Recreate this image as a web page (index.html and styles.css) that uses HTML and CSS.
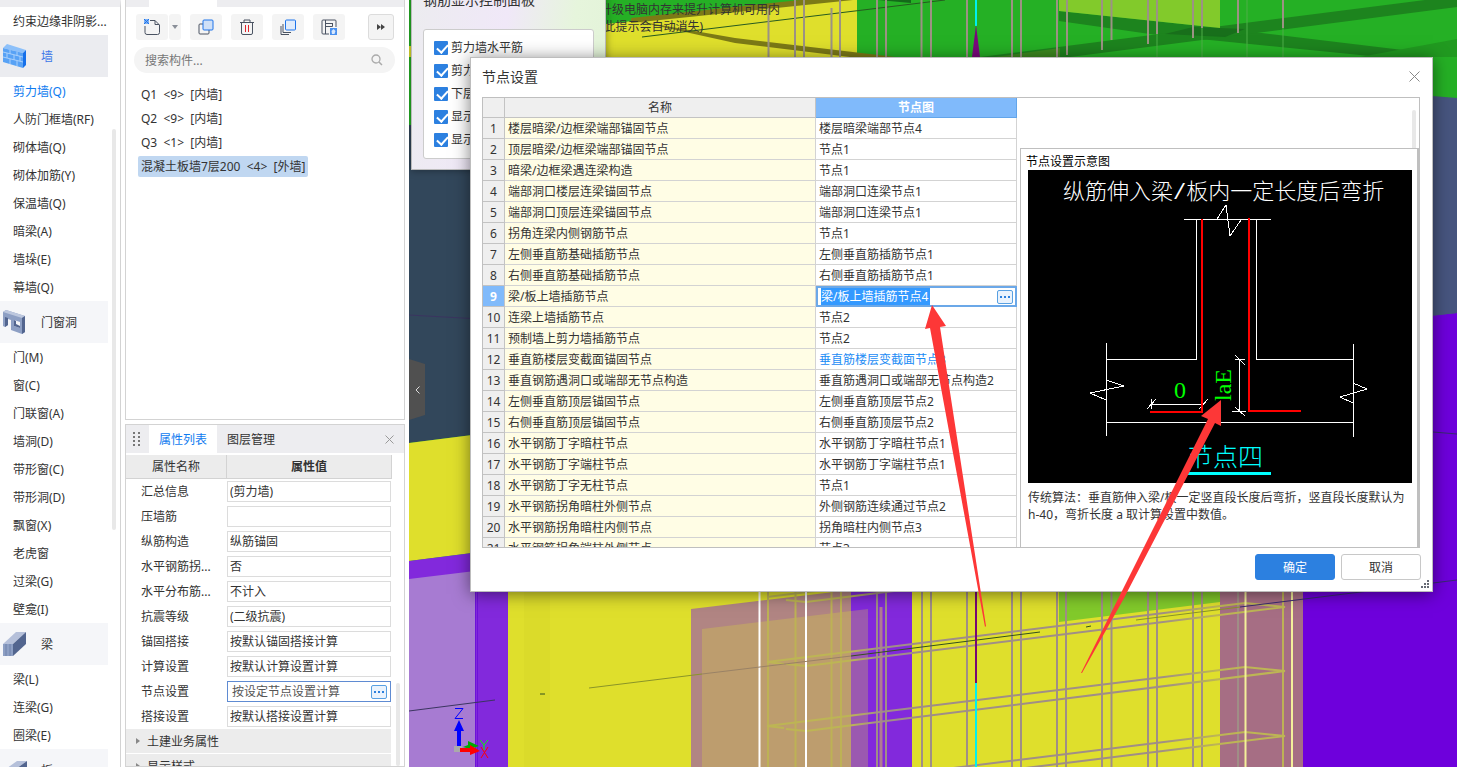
FILE: index.html
```html
<!DOCTYPE html>
<html lang="zh-CN">
    <head>
        <meta charset="utf-8">
        <title>节点设置</title>
        <link rel="stylesheet" href="styles.css">
    </head>
    <body>
        <nav class="nav">
            <a class="item" href="#">约束边缘非阴影...</a>
            <a class="group active" href="#">
                <svg width="24" height="24" viewBox="0 0 24 24"><path d="M0 4L4 0L23 6L20 9Z" fill="#8cc0fa"/><path d="M0 4L20 9V24L0 18Z" fill="#58a2f5"/><path d="M20 9L23 6V21L20 24Z" fill="#1670ea"/><path d="M0 8L20 13M0 13L20 18M7 6V10M14 8V12M4 9V14M11 11V16M17 12V17M7 15V20M14 17V22" stroke="#a9d0fb" fill="none"/></svg>
                墙
            </a>
            <a class="item active" href="#">剪力墙(Q)</a>
            <a class="item" href="#">人防门框墙(RF)</a>
            <a class="item" href="#">砌体墙(Q)</a>
            <a class="item" href="#">砌体加筋(Y)</a>
            <a class="item" href="#">保温墙(Q)</a>
            <a class="item" href="#">暗梁(A)</a>
            <a class="item" href="#">墙垛(E)</a>
            <a class="item" href="#">幕墙(Q)</a>
            <a class="group" href="#">
                <svg width="24" height="24" viewBox="0 0 24 24"><path d="M0 2L3 0L22 6V22L19 24L8 20V10L5 9V15L2 17L0 16Z" fill="#8d9fc4"/><path d="M0 2L3 0L22 6L19 8Z" fill="#bcc7de"/><path d="M19 8L22 6V22L19 24Z" fill="#52658f"/><path d="M2 7L5 8V15L2 17Z" fill="#52658f"/><path d="M11 10L17 12V18L11 16Z" fill="#f5f6f9"/><path d="M11 10L13 11V14L17 16V18L11 16Z" fill="#52658f"/></svg>
                门窗洞
            </a>
            <a class="item" href="#">门(M)</a>
            <a class="item" href="#">窗(C)</a>
            <a class="item" href="#">门联窗(A)</a>
            <a class="item" href="#">墙洞(D)</a>
            <a class="item" href="#">带形窗(C)</a>
            <a class="item" href="#">带形洞(D)</a>
            <a class="item" href="#">飘窗(X)</a>
            <a class="item" href="#">老虎窗</a>
            <a class="item" href="#">过梁(G)</a>
            <a class="item" href="#">壁龛(I)</a>
            <a class="group" href="#">
                <svg width="24" height="24" viewBox="0 0 24 24"><path d="M0 12L13 0H23L10 12Z" fill="#b5c0da"/><path d="M10 12L23 0V12L10 24Z" fill="#52658f"/><path d="M0 12H10V24H0Z" fill="#8d9fc4"/><path d="M3 12V24M7 12V24" stroke="#6f82ab"/></svg>
                梁
            </a>
            <a class="item" href="#">梁(L)</a>
            <a class="item" href="#">连梁(G)</a>
            <a class="item" href="#">圈梁(E)</a>
            <a class="group" href="#">
                <svg width="24" height="24" viewBox="0 0 24 24"><path d="M0 13L14 3H24L10 13Z" fill="#b5c0da"/><path d="M10 13L24 3V9L10 19Z" fill="#52658f"/><path d="M0 13H10V19H0Z" fill="#8d9fc4"/></svg>
                板
            </a>
            <i class="thumb"></i>
        </nav>

        <div class="side">
            <section class="panel components">
                <div class="tab-strip"><i></i></div>
                <div class="toolbar">
                    <div class="split">
                        <button aria-label="新建"><svg width="16" height="16" viewBox="0 0 16 16"><path d="M6 1.5H11L15.500 6V13.500Q15.500 15.500 13.500 15.500H3Q1 15.500 1 13.500V7M11 1.500V5.500H15" fill="none" stroke="#4a5362"/><path d="M0 0H5V5H0Z" fill="#7cb0f5"/><path d="M0 0L5 5M5 0L0 5" stroke="#1e74ea"/></svg></button>
                        <button class="drop" aria-label="更多"><svg width="6" height="4" viewBox="0 0 6 4"><path d="M0 0H6L3 4Z" fill="#8a8f98"/></svg></button>
                    </div>
                    <button aria-label="复制"><svg width="16" height="16" viewBox="0 0 16 16"><rect x="1" y="5" width="10" height="10" rx="1" fill="none" stroke="#4a5362"/><rect x="5" y="1" width="10" height="10" rx="1" fill="#cfe0f7" stroke="#1e74ea"/></svg></button>
                    <button aria-label="删除"><svg width="16" height="16" viewBox="0 0 16 16"><path d="M1 3.500H15M5 3V1H11V3M2.500 4V14Q2.500 15.500 4 15.500H12Q13.500 15.500 13.500 14V4" fill="none" stroke="#4a5362"/><path d="M6.500 6V13M9.500 6V13" stroke="#e0242c"/></svg></button>
                    <button aria-label="层间复制"><svg width="16" height="16" viewBox="0 0 16 16"><path d="M1 7V15.500H9M3 5V13.500H11" fill="none" stroke="#4a5362"/><rect x="5.500" y="1" width="10" height="10" rx="1" fill="#e0ecfc" stroke="#1e74ea"/></svg></button>
                    <button aria-label="存档"><svg width="16" height="16" viewBox="0 0 16 16"><path d="M8 15H2Q1 15 1 14V2Q1 1 2 1H14Q15 1 15 2V8M4.500 1V15M4.500 7.500H11.500V4M4.500 4.500H11" fill="none" stroke="#4a5362"/><rect x="9" y="9" width="7" height="7" fill="#4a90ee"/><path d="M12.500 10L14.500 12L13.500 15H11L10.500 12Z" fill="#d8e8fd"/></svg></button>
                    <button class="more" aria-label="展开"><svg width="8" height="6" viewBox="0 0 8 6"><path d="M0 0L4 3L0 6ZM4 0L8 3L4 6Z" fill="#444"/></svg></button>
                </div>
                <div class="search">
                    <input type="text" placeholder="搜索构件..." aria-label="搜索构件">
                    <svg width="12" height="12" viewBox="0 0 12 12"><circle cx="5" cy="5" r="4" fill="none" stroke="#aaa" stroke-width="1.300"/><path d="M8 8L11 11" stroke="#aaa" stroke-width="1.500"/></svg>
                </div>
                <ul class="list">
                    <li><a href="#">Q1&nbsp; &lt;9&gt;&nbsp; [内墙]</a></li>
                    <li><a href="#">Q2&nbsp; &lt;9&gt;&nbsp; [内墙]</a></li>
                    <li><a href="#">Q3&nbsp; &lt;1&gt;&nbsp; [内墙]</a></li>
                    <li><a class="selected" href="#">混凝土板墙7层200&nbsp; &lt;4&gt;&nbsp; [外墙]</a></li>
                </ul>
            </section>

            <section class="panel props">
                <div class="tabs">
                    <svg class="grip" width="7" height="14" viewBox="0 0 7 14"><path d="M1 0V14M6 0V14" stroke="#777" stroke-width="2" stroke-dasharray="2 2"/></svg>
                    <button class="tab current">属性列表</button>
                    <button class="tab">图层管理</button>
                    <button class="close" aria-label="关闭"><svg width="9" height="9" viewBox="0 0 9 9"><path d="M0.500 0.500L8.500 8.500M8.500 0.500L0.500 8.500" stroke="#999"/></svg></button>
                </div>
                <div class="props-head"><span>属性名称</span><b>属性值</b></div>
                <form class="props-body">
                    <div class="prop"><label for="p1">汇总信息</label><input id="p1" type="text" value="(剪力墙)"></div>
                    <div class="prop"><label for="p2">压墙筋</label><input id="p2" type="text" value=""></div>
                    <div class="prop"><label for="p3">纵筋构造</label><input id="p3" type="text" value="纵筋锚固"></div>
                    <div class="prop"><label for="p4">水平钢筋拐...</label><input id="p4" type="text" value="否"></div>
                    <div class="prop"><label for="p5">水平分布筋...</label><input id="p5" type="text" value="不计入"></div>
                    <div class="prop"><label for="p6">抗震等级</label><input id="p6" type="text" value="(二级抗震)"></div>
                    <div class="prop"><label for="p7">锚固搭接</label><input id="p7" type="text" value="按默认锚固搭接计算"></div>
                    <div class="prop"><label for="p8">计算设置</label><input id="p8" type="text" value="按默认计算设置计算"></div>
                    <div class="prop editing"><label for="p9">节点设置</label><div class="field"><input id="p9" type="text" value="按设定节点设置计算"><button type="button" class="dots" aria-label="选择"><i></i><i></i><i></i></button></div></div>
                    <div class="prop"><label for="p10">搭接设置</label><input id="p10" type="text" value="按默认搭接设置计算"></div>
                    <button type="button" class="fold">土建业务属性</button>
                    <button type="button" class="fold">显示样式</button>
                </form>
                <i class="thumb"></i>
            </section>
        </div>

        <main class="viewport">
            <svg class="scene" viewBox="409 0 1048 767" preserveAspectRatio="xMinYMin slice">
                <defs>
                    <linearGradient id="hoop" gradientUnits="userSpaceOnUse" x1="767" y1="0" x2="1285" y2="0">
                        <stop offset="0.160" stop-color="#bdb554"/>
                        <stop offset="0.220" stop-color="#a08e86"/>
                        <stop offset="0.760" stop-color="#a08e86"/>
                        <stop offset="0.870" stop-color="#bdb554"/>
                    </linearGradient>
                </defs>
                <rect x="409" width="1048" height="767" fill="#25b025"/>
                <!-- upper slabs -->
                <path d="M409 46H470V57H606L606 24L820 0H857V57H409Z" fill="#dfdf2c"/>
                <path d="M631 18L800 0H853L631 23Z" fill="#7c7a16"/>
                <path d="M631 20L735 38L895 57H850L735 43Z" fill="#7c7a16"/>
                <path d="M878 0H911V3Z" fill="#14691a"/>
                <path d="M1059 11L1220 28L1411 51L1380 57L1150 34L1059 21Z" fill="#1d841e"/>
                <path d="M980 57L1425 0H1457V7L1070 57Z" fill="#1d841e"/>
                <path d="M1193 27L1245 29L1225 37L1165 34Z" fill="#186f1b"/>
                <path d="M1360 57L1457 39V57Z" fill="#219a20"/>
                <path d="M1059 0H1220V28L1059 11Z" fill="#82ca2b"/>
                <path d="M995 57L1060 48V57Z" fill="#3d8a20"/>
                <path d="M642 37L945 0" stroke="#265a20"/>
                <path d="M768.500 8V57M795 0V57M804 0V57M831.500 8V57M840 0V57M877 0V57M886 0V57M921.500 0V57M931 0V57M967 0V57M1012 0V57M1021 0V57M1057 0V57M1067 0V55M1102 0V50M1111.500 0V40M1148 0V44M1157 0V34M1193 0V38M1202 0V28M1238 0V33M1283 0V28" stroke="#9c9284" stroke-width="2"/>
                <path d="M1202 28V57M1157 34V57M1247 0V57M1283 28V57" stroke="#4fae48"/>
                <path d="M976 0V26" stroke="#00f0f0" stroke-width="2"/>
                <path d="M976 25L980 57H972Z" fill="#7a087c"/>
                <!-- left and right edges -->
                <path d="M409 125H480V434L409 443Z" fill="#32475b"/>
                <path d="M409 443L480 434V552L409 561Z" fill="#dfdf2c"/>
                <path d="M409 561L480 552L508 592V767H409Z" fill="#8229dc"/>
                <path d="M409 579L475 571V767H409Z" fill="#a77bd2"/>
                <path d="M475.500 580V767M477.500 580V767" stroke="#6d12d8"/>
                <path d="M409 315L480 319M409 711L495 700" stroke="#3b3560"/>
                <path d="M1420 95L1457 98V313L1420 317Z" fill="#47557f"/>
                <!-- lower walls -->
                <path d="M508 580H1230V767H508Z" fill="#dfdf2c"/>
                <path d="M524 592H550V767H524Z" fill="#dbdb2a"/>
                <path d="M691 609L851 590V767H691Z" fill="#b18583"/>
                <path d="M702 629L851 611V767H702Z" fill="#bd9d6e"/>
                <path d="M851 580H912V767H851Z" fill="#8229dc"/>
                <path d="M851 611L868 609V767H851Z" fill="#9b59b0"/>
                <path d="M1059 590H1220V602L1059 622Z" fill="#82ca2b"/>
                <path d="M1220 590H1303V767H1220Z" fill="#a66e84"/>
                <path d="M1303 580L1420 317L1457 313V767H1303Z" fill="#6e00dc"/>
                <path d="M768 592V767M795.500 592V767M831.500 592V767M841 592V767M1283 592V767" stroke="#bdb255" stroke-width="2"/>
                <path d="M877 592V767M886 592V767M922 592V767M931 592V767M967 592V767M1012 592V767M1021 592V767M1057 592V767M1066 592V767M1102 592V767M1111.500 592V767M1148 592V767M1157 592V767M1193 592V767M1202 592V767M1238 592V767" stroke="#a08e86" stroke-width="2"/>
                <path d="M881 607V767" stroke="#b07b92" stroke-width="3"/>
                <g fill="none" stroke="url(#hoop)" stroke-width="2">
                    <path d="M767 597L1245 538L1285 542L806 602L786 600"/>
                    <path d="M767 662L1245 603L1285 607L806 666L786 664M767 662L784 664"/>
                    <path d="M767 726L1245 667L1285 671L806 731L786 729M767 726L784 728"/>
                    <path d="M767 791L1245 732L1285 736L806 795Z"/>
                </g>
                <path d="M759.500 592V767M806 592V767" stroke="#fff" stroke-width="2"/>
                <path d="M1245.500 592V767M1292 592V767" stroke="#f4f09a" stroke-width="2"/>
                <path d="M589 688L702 674M1136 620L1240 607" stroke="#8a9428"/>
                <path d="M702 674L851 656" stroke="#9a8266"/>
                <path d="M851 656L1040 632M540 694H545M1086 627L1091 626" stroke="#33501e"/>
                <path d="M1240 607L1457 580M1433 432L1457 434" stroke="#3a2b70"/>
                <path d="M976 592V683" stroke="#780874" stroke-width="2"/>
                <path d="M976 683V767" stroke="#00f0f0" stroke-width="2"/>
                <!-- coordinate axes -->
                <path d="M454 746H462V752H454Z" fill="#aaa"/>
                <path d="M457 746V731H454L459 720L464 731H461V746Z" fill="#00f"/>
                <path d="M463 747L468 745V741L479 746L470 749Z" fill="#0a0"/>
                <path d="M460 748H470V745L480 751L470 755V752H460Z" fill="#f00"/>
                <path d="M455 708.500H463L455 718.500H463" fill="none" stroke="#00f"/>
                <path d="M480 740L484 745L488 740M484 745V750" fill="none" stroke="#0f0"/>
                <path d="M481 747L488 758M488 747L481 758" stroke="#f00"/>
            </svg>
            <p class="hint">升级电脑内存来提升计算机可用内<br>(此提示会自动消失)</p>
            <button class="collapse" aria-label="收起"><svg width="5" height="8" viewBox="0 0 5 8"><path d="M4.500 0.500L1 4L4.500 7.500" fill="none" stroke="#ddd"/></svg></button>

            <section class="float">
                <h2>钢筋显示控制面板</h2>
                <div class="checks">
                    <label><input type="checkbox" checked>剪力墙水平筋</label>
                    <label><input type="checkbox" checked>剪力</label>
                    <label><input type="checkbox" checked>下层</label>
                    <label><input type="checkbox" checked>显示</label>
                    <label><input type="checkbox" checked>显示</label>
                </div>
            </section>

            <section class="dialog" role="dialog" aria-labelledby="dlg-title">
                <header>
                    <h1 id="dlg-title">节点设置</h1>
                    <button class="close" aria-label="关闭"><svg width="11" height="11" viewBox="0 0 11 11"><path d="M0.500 0.500L10.500 10.500M10.500 0.500L0.500 10.500" stroke="#888"/></svg></button>
                </header>
                <div class="content">
                    <table class="nodes">
                        <thead>
                            <tr><th class="num"></th><th class="name">名称</th><th class="pic">节点图</th></tr>
                        </thead>
                        <tbody>
                            <tr><th>1</th><td>楼层暗梁/边框梁端部锚固节点</td><td>楼层暗梁端部节点4</td></tr>
                            <tr><th>2</th><td>顶层暗梁/边框梁端部锚固节点</td><td>节点1</td></tr>
                            <tr><th>3</th><td>暗梁/边框梁遇连梁构造</td><td>节点1</td></tr>
                            <tr><th>4</th><td>端部洞口楼层连梁锚固节点</td><td>端部洞口连梁节点1</td></tr>
                            <tr><th>5</th><td>端部洞口顶层连梁锚固节点</td><td>端部洞口连梁节点1</td></tr>
                            <tr><th>6</th><td>拐角连梁内侧钢筋节点</td><td>节点1</td></tr>
                            <tr><th>7</th><td>左侧垂直筋基础插筋节点</td><td>左侧垂直筋插筋节点1</td></tr>
                            <tr><th>8</th><td>右侧垂直筋基础插筋节点</td><td>右侧垂直筋插筋节点1</td></tr>
                            <tr class="current"><th>9</th><td>梁/板上墙插筋节点</td><td><div class="edit"><input type="text" value="梁/板上墙插筋节点4" aria-label="节点图"><button class="dots" aria-label="选择"><i></i><i></i><i></i></button></div></td></tr>
                            <tr><th>10</th><td>连梁上墙插筋节点</td><td>节点2</td></tr>
                            <tr><th>11</th><td>预制墙上剪力墙插筋节点</td><td>节点2</td></tr>
                            <tr><th>12</th><td>垂直筋楼层变截面锚固节点</td><td class="changed">垂直筋楼层变截面节点3</td></tr>
                            <tr><th>13</th><td>垂直钢筋遇洞口或端部无节点构造</td><td>垂直筋遇洞口或端部无节点构造2</td></tr>
                            <tr><th>14</th><td>左侧垂直筋顶层锚固节点</td><td>左侧垂直筋顶层节点2</td></tr>
                            <tr><th>15</th><td>右侧垂直筋顶层锚固节点</td><td>右侧垂直筋顶层节点2</td></tr>
                            <tr><th>16</th><td>水平钢筋丁字暗柱节点</td><td>水平钢筋丁字暗柱节点1</td></tr>
                            <tr><th>17</th><td>水平钢筋丁字端柱节点</td><td>水平钢筋丁字端柱节点1</td></tr>
                            <tr><th>18</th><td>水平钢筋丁字无柱节点</td><td>节点1</td></tr>
                            <tr><th>19</th><td>水平钢筋拐角暗柱外侧节点</td><td>外侧钢筋连续通过节点2</td></tr>
                            <tr><th>20</th><td>水平钢筋拐角暗柱内侧节点</td><td>拐角暗柱内侧节点3</td></tr>
                            <tr><th>21</th><td>水平钢筋拐角端柱外侧节点</td><td>节点3</td></tr>
                        </tbody>
                    </table>
                    <div class="preview">
                        <h3>节点设置示意图</h3>
                        <svg class="drawing" viewBox="1028 170 384 313">
                            <rect x="1028" y="170" width="384" height="313" fill="#000"/>
                            <g fill="none" stroke="#fff" shape-rendering="crispEdges">
                                <path d="M1184 219.500H1271M1196.500 219V359.500H1106M1256.500 219V359.500H1353M1106.500 343V436M1353.500 344V437M1106 422.500H1353"/>
                                <path d="M1217 219L1226 205L1230 236L1241 220M1106 380L1124 386L1090 393L1106 400M1353 383L1367 389L1340 397L1353 403"/>
                                <path d="M1151 404.500H1203M1151.500 399V409M1147 409L1156 399M1199 409L1208 399"/>
                                <path d="M1239.500 359V411M1235 359.500H1245M1232 411.500H1246M1235 355L1245 365M1235 407L1245 416"/>
                            </g>
                            <path d="M1202 219V412H1150M1249 218V411H1301" fill="none" stroke="#f00" stroke-width="2"/>
                            <text x="1063" y="199" class="cad white">纵筋伸入梁/板内一定长度后弯折</text>
                            <text x="1174" y="398" class="cad green">0</text>
                            <text transform="translate(1231 401) rotate(-90)" class="cad green">laE</text>
                            <text x="1188" y="466" class="cad cyan">节点四</text>
                            <path d="M1187 473.500H1271" stroke="#0ff" stroke-width="3"/>
                        </svg>
                        <p>传统算法：垂直筋伸入梁/板一定竖直段长度后弯折，竖直段长度默认为 h-40，弯折长度 a 取计算设置中数值。</p>
                    </div>
                    <i class="thumb"></i>
                </div>
                <footer>
                    <button class="btn primary">确定</button>
                    <button class="btn">取消</button>
                </footer>
                <svg class="resize" width="8" height="8" viewBox="0 0 8 8"><path d="M6 0H8V2H6ZM3 3H5V5H3ZM6 3H8V5H6ZM0 6H2V8H0ZM3 6H5V8H3ZM6 6H8V8H6Z" fill="#666b75"/></svg>
            </section>

            <svg class="arrows" viewBox="409 0 1048 767" preserveAspectRatio="xMinYMin slice">
                <path d="M932 305L946 326L940 327L986 626L985 627L930 328L925 329Z" fill="#fd3737"/>
                <path d="M1221 400L1221 426L1215 423L1123 600L1082 673L1081 673L1118 599L1208 419L1201 416Z" fill="#fd3737"/>
            </svg>
        </main>
    </body>
</html>
```
FILE: styles.css
```css
* {
    box-sizing: border-box;
}
body {
    margin: 0;
    height: 100vh;
    display: flex;
    overflow: hidden;
    background: #fff;
    color: #333;
    font: 12px/17px "Noto Sans", "Noto Sans CJK SC", sans-serif;
}
button, input {
    font: inherit;
    color: inherit;
    border: none;
    padding: 0;
    margin: 0;
    background: none;
    outline: none;
}
button {
    display: flex;
    align-items: center;
    justify-content: center;
}
a {
    color: inherit;
    text-decoration: none;
}
h1, h2, h3, p, ul {
    margin: 0;
    padding: 0;
    font-weight: normal;
    list-style: none;
}
.thumb {
    position: absolute;
    width: 4px;
    border-radius: 2px;
    background: #e8e8e8;
}

/* component tree */
.nav {
    position: relative;
    flex: 0 0 121px;
    border-top: 7px solid #ededf0;
    border-right: 1px solid #d3d3d3;
    overflow: hidden;
}
.nav .item {
    display: block;
    height: 28px;
    padding: 1px 0 0 13px;
    line-height: 28px;
    white-space: nowrap;
}
.nav .item.active {
    color: #0f7bf0;
}
.nav .group {
    display: flex;
    align-items: center;
    gap: 14px;
    height: 42px;
    margin-right: 12px;
    padding-left: 3px;
    background: #f5f6f9;
}
.nav .group.active {
    background: #ebecf0;
    color: #3a76e8;
}
.nav .thumb {
    right: 4px;
    top: 122px;
    height: 401px;
}

/* docked panels */
.side {
    flex: 0 0 280px;
    min-width: 0;
    margin: 0 4px;
    display: flex;
    flex-direction: column;
    gap: 4px;
}
.panel {
    border: 1px solid #d3d3d3;
}
.components {
    flex: 0 0 420px;
    border-top: none;
}
.tab-strip {
    height: 7px;
    padding-left: 23px;
    background: #ededf0;
}
.tab-strip i {
    display: block;
    width: 68px;
    height: 7px;
    background: #fff;
}
.toolbar {
    display: flex;
    gap: 9px;
    padding: 7px 10px 0;
}
.toolbar button {
    width: 32px;
    height: 26px;
    border-radius: 3px;
    background: #f4f4f4;
}
.split {
    display: flex;
    gap: 1px;
}
.toolbar .drop {
    width: 12px;
}
.toolbar .more {
    width: 26px;
    margin-left: auto;
    border: 1px solid #dcdcdc;
}
.search {
    display: flex;
    align-items: center;
    height: 26px;
    margin: 7px 9px 9px 8px;
    padding: 0 12px 0 11px;
    border-radius: 13px;
    background: #f4f4f4;
}
.search input {
    flex: 1;
    min-width: 0;
}
.search input::placeholder {
    color: #777;
}
.list {
    padding-left: 12px;
}
.list li {
    height: 24px;
    padding-top: 2px;
}
.list a {
    display: inline-block;
    padding: 0 3px;
    border-radius: 2px;
    line-height: 21px;
}
.list .selected {
    background: #c0d7f1;
}

.props {
    position: relative;
    flex: 1;
    min-height: 0;
    overflow: hidden;
}
.tabs {
    display: flex;
    align-items: center;
    height: 28px;
    background: #ededf0;
}
.grip {
    margin: 0 9px 0 7px;
}
.tab {
    width: 68px;
    height: 28px;
}
.tab.current {
    background: #fff;
    color: #0f7bf0;
}
.tabs .close {
    margin: 0 10px 0 auto;
}
.props-head {
    display: flex;
    height: 24px;
    margin: 2px 12px 0 0;
    line-height: 24px;
    text-align: center;
    background: #ececec;
    border: 1px solid #d3d3d3;
    border-width: 0 1px 1px 0;
}
.props-head span {
    flex: 0 0 101px;
    border-right: 1px solid #d3d3d3;
}
.props-head b {
    flex: 1;
}
.props-body {
    margin-right: 13px;
}
.prop {
    display: flex;
    height: 25px;
    padding: 2px 0;
    line-height: 21px;
}
.prop label {
    flex: 0 0 101px;
    padding-left: 15px;
}
.prop > input, .field {
    flex: 1;
    min-width: 0;
    border: 1px solid #dcdcdc;
    padding: 0 2px;
}
.field {
    display: flex;
    align-items: center;
    border-color: #5f8bd2;
    padding: 0 3px 0 4px;
}
.field input {
    flex: 1;
    min-width: 0;
    color: #555;
}
.dots {
    width: 16px;
    height: 14px;
    gap: 2px;
    border: 1px solid #58a0e2;
    border-radius: 2px;
    background: #eaf3fd;
}
.dots i {
    width: 2px;
    height: 2px;
    background: #2c80dd;
}
.fold {
    width: 100%;
    height: 24px;
    margin-bottom: 1px;
    padding-left: 10px;
    gap: 7px;
    justify-content: flex-start;
    background: #ececec;
}
.fold::before {
    content: '';
    border: 3px solid transparent;
    border-left: 4px solid #888;
    border-right: none;
}
.props .thumb {
    right: 4px;
    top: 258px;
    bottom: 0;
}

/* 3D view */
.viewport {
    position: relative;
    flex: 1;
    min-width: 0;
    overflow: hidden;
}
.scene, .arrows {
    position: absolute;
    width: 100%;
    height: 100%;
}
.arrows {
    pointer-events: none;
}
.hint {
    position: absolute;
    left: 191px;
    top: 1px;
    white-space: nowrap;
}
.collapse {
    position: absolute;
    left: 0;
    top: 359px;
    width: 16px;
    height: 61px;
    background: #505050;
    clip-path: polygon(0 0, 100% 8%, 100% 92%, 0 100%);
}

.float {
    position: absolute;
    left: 2px;
    top: -20px;
    width: 195px;
    height: 190px;
    padding: 9px 11px;
    border: 1px solid #bbb;
    background: linear-gradient(100deg, #ececef, #f0e8f8 45%, #e6f5dc 75%, #e2f3d8);
    box-shadow: 0 0 8px rgba(0, 0, 0, 0.4);
}
.float h2 {
    font-size: 14px;
    line-height: 20px;
}
.checks {
    height: 130px;
    margin-top: 19px;
    padding: 6px 10px;
    border: 1px solid #ccc;
    border-radius: 3px;
    background: #fff;
}
.checks label {
    display: flex;
    align-items: center;
    gap: 3px;
    height: 23px;
    white-space: nowrap;
}
.checks input {
    appearance: none;
    width: 14px;
    height: 14px;
    border-radius: 1px;
    background: #2c80e0;
}
.checks input::before {
    content: '';
    display: block;
    width: 5px;
    height: 9px;
    margin: 1px 0 0 5px;
    border: solid #fff;
    border-width: 0 2px 2px 0;
    transform: rotate(42deg);
}

/* node settings dialog */
.dialog {
    position: absolute;
    left: 61px;
    right: 24px;
    top: 57px;
    bottom: 175px;
    display: flex;
    flex-direction: column;
    padding: 0 11px;
    border: 1px solid #bdbdbd;
    background: #fff;
    box-shadow: 0 2px 16px rgba(0, 0, 0, 0.5);
}
.dialog header {
    display: flex;
    justify-content: space-between;
    align-items: center;
    height: 39px;
    padding-bottom: 2px;
}
.dialog .close {
    width: 11px;
    margin-right: 1px;
}
.dialog h1 {
    font-size: 14px;
    line-height: 20px;
}
.content {
    position: relative;
    flex: 1;
    min-height: 0;
    display: flex;
    align-items: flex-start;
    gap: 3px;
    margin-right: 1px;
    border: 1px solid #bfbfbf;
    overflow: hidden;
}
.nodes {
    flex: 0 0 534px;
    table-layout: fixed;
    width: 534px;
    border-spacing: 0;
}
.nodes th, .nodes td {
    height: 21px;
    padding: 0 3px;
    border: 1px solid #d3d3d3;
    border-width: 0 1px 1px 0;
    text-align: left;
    white-space: nowrap;
    line-height: 17px;
}
.nodes th {
    padding: 0;
    background: #efefef;
    border-color: #c3c3c3;
    font-weight: normal;
    text-align: center;
}
.nodes thead th {
    height: 20px;
}
.nodes .num {
    width: 22px;
}
.nodes .name {
    width: 311px;
}
.nodes thead .pic {
    background: #80bafb;
    border-color: #62a5ea;
    color: #fff;
    font-weight: bold;
}
.nodes td:nth-child(2) {
    background: #fffde5;
}
.nodes .changed {
    color: #1c8cf5;
}
.nodes .current th {
    background: #80bafb;
    color: #fff;
    font-weight: bold;
}
.nodes .current td:last-child {
    padding: 0;
    border: none;
}
.edit {
    display: flex;
    align-items: center;
    justify-content: space-between;
    height: 21px;
    padding: 0 2px 0 3px;
    border: 2px solid #6ba8e8;
}
.edit input {
    width: 109px;
    height: 17px;
    background: #3399ff;
    color: #fff;
}
.preview {
    flex: 1;
    align-self: stretch;
    margin-top: 50px;
    padding: 4px 5px 0 7px;
    border: 1px solid #bfbfbf;
    border-right-width: 2px;
    border-bottom: none;
}
.preview h3 {
    margin-left: -2px;
    font-size: 12px;
    color: #000;
}
.drawing {
    display: block;
    width: 100%;
    margin-bottom: 6px;
}
.cad {
    font: 300 22px "Liberation Mono", "Noto Sans CJK SC", monospace;
}
.white {
    fill: #fff;
}
.green {
    fill: #0f0;
    font-family: "Liberation Serif", serif;
    font-size: 24px;
}
.cyan {
    fill: #0ff;
    font-size: 25px;
}
.content .thumb {
    right: 3px;
    top: 12px;
    height: 38px;
    border-radius: 2px 2px 0 0;
}
.dialog footer {
    display: flex;
    justify-content: flex-end;
    gap: 6px;
    padding: 6px 0 11px;
}
.btn {
    width: 80px;
    height: 26px;
    border: 1px solid #c8c8c8;
    border-radius: 3px;
}
.btn.primary {
    border-color: #2c80e0;
    background: #2c80e0;
    color: #fff;
}
.resize {
    position: absolute;
    right: 3px;
    bottom: 3px;
}
```
